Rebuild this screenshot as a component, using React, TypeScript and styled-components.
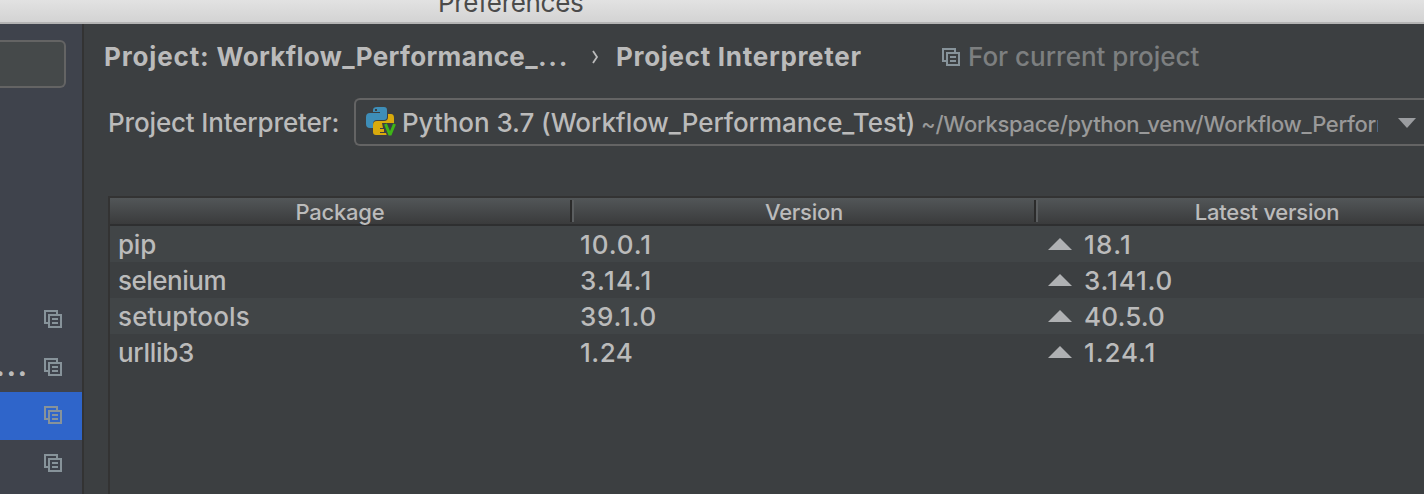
import React from "react";
import styled, { createGlobalStyle } from "styled-components";

const GlobalStyle = createGlobalStyle`
  * { box-sizing: border-box; }
  html, body { margin: 0; padding: 0; overflow: hidden; background: #3c3f41; }
  body { font-family: Inter, "Liberation Sans", sans-serif; font-size: 26px; color: #bbbbbb; }
`;

const Window = styled.div`
  width: 1424px;
  height: 494px;
  display: flex;
  flex-direction: column;
  overflow: hidden;
`;

const TitleBar = styled.header`
  height: 24px;
  flex: none;
  display: flex;
  align-items: flex-end;
  padding: 0 0 3px 438px;
  overflow: hidden;
  background: linear-gradient(#e2e2e2, #d3d3d3);
  border-bottom: 2px solid #b4b4b4;
  color: #4b4b4b;
`;

const Text = styled.span<{ $spacing?: number; $size?: number; $weight?: number; $color?: string }>`
  white-space: pre;
  line-height: 32px;
  letter-spacing: ${(p) => p.$spacing ?? 0}px;
  font-size: ${(p) => p.$size ?? 26}px;
  font-weight: ${(p) => p.$weight ?? 500};
  color: ${(p) => p.$color ?? "inherit"};
`;

const Body = styled.div`
  flex: 1;
  display: flex;
  min-height: 0;
`;

const Sidebar = styled.aside`
  width: 84px;
  flex: none;
  background: #3f434c;
  border-right: 2px solid #333333;
  padding-top: 16px;
`;

const SearchField = styled.div`
  width: 66px;
  height: 48px;
  margin-bottom: 208px;
  background: #45494a;
  border: 2px solid #646464;
  border-left: 0;
  border-radius: 0 6px 6px 0;
`;

const SidebarItem = styled.div<{ $selected?: boolean }>`
  height: 48px;
  display: flex;
  align-items: center;
  justify-content: flex-end;
  gap: 15px;
  padding: 0 20px 2px 0;
  background: ${(p) => (p.$selected ? "#2f65ca" : "transparent")};
`;

const Main = styled.main`
  flex: 1;
  min-width: 0;
  display: flex;
  flex-direction: column;
`;

const Breadcrumb = styled.div`
  height: 74px;
  flex: none;
  display: flex;
  align-items: center;
  padding: 0 0 8px 20px;
`;

const CrumbArrow = styled.svg`
  flex: none;
  margin: 0 16px 0 0;
`;

const Crumb = styled.div<{ $width: number }>`
  width: ${(p) => p.$width}px;
  flex: none;
  display: flex;
  align-items: center;
  gap: 8px;
`;

const InterpreterRow = styled.div`
  height: 48px;
  flex: none;
  display: flex;
  align-items: center;
  padding-left: 24px;
`;

const Label = styled.label`
  width: 246px;
  flex: none;
  display: flex;
  padding-top: 2px;
`;

const Combo = styled.div`
  flex: 1;
  height: 48px;
  min-width: 0;
  display: flex;
  align-items: center;
  border: 2px solid #646464;
  border-right: 0;
  border-radius: 6px 0 0 6px;
  padding-left: 10px;
`;

const ComboValue = styled.div`
  width: 976px;
  flex: none;
  display: flex;
  align-items: baseline;
  overflow: hidden;
  padding-top: 2px;
  margin: 0 20px 0 4px;
`;

const ValueName = styled.div`
  width: 519px;
  flex: none;
`;

const Table = styled.section`
  flex: 1;
  margin: 50px 0 0 24px;
  border-top: 2px solid #333333;
  border-left: 2px solid #333333;
  overflow: hidden;
`;

const columns = "462px 464px 462px";

const HeaderRow = styled.div`
  display: grid;
  grid-template-columns: ${columns};
  width: 1388px;
  height: 28px;
  background: linear-gradient(#525658, #3a3b3c 26px);
  border-bottom: 2px solid #2e2f30;
`;

const HeaderCell = styled.div`
  height: 22px;
  margin-top: 2px;
  padding-top: 2px;
  display: flex;
  align-items: center;
  justify-content: center;
  border-left: 2px solid #5b5e60;
  border-right: 2px solid #2b2b2b;
  &:first-child { border-left: 0; }
`;

const Row = styled.div<{ $striped: boolean }>`
  display: grid;
  grid-template-columns: ${columns};
  width: 1388px;
  height: 36px;
  background: ${(p) => (p.$striped ? "#414547" : "transparent")};
`;

const Cell = styled.div<{ $indent?: number }>`
  display: flex;
  align-items: center;
  gap: 12px;
  padding: 2px 0 0 ${(p) => p.$indent ?? 8}px;
`;

const Glyph = styled.svg`
  flex: none;
`;

const UpgradeGlyph = styled(Glyph)`
  margin-bottom: 2px;
`;

const ArrowGlyph = styled(Glyph)`
  margin-top: 2px;
`;

function CopyIcon() {
  return (
    <Glyph width="18" height="18" viewBox="0 0 18 18" fill="none" stroke="#87939a" strokeWidth="2">
      <path d="M4 13H1V1H13V4" />
      <path d="M5 5H17V17H5Z" />
      <path d="M8 9H14M8 13H14" />
    </Glyph>
  );
}

function PythonIcon() {
  return (
    <Glyph width="32" height="32" viewBox="0 0 32 32">
      <path fill="#3e8eb8" d="M11 1H18Q21 1 21 4V11Q21 14 18 14H11Q7 14 7 18V22H4Q0 22 0 18V11Q0 7 4 7H14V6H7V4Q7 1 11 1Z" />
      <rect x="9" y="3" width="2" height="2" fill="#3c3f41" />
      <path fill="#d9aa0c" d="M22 8H25Q28 8 28 12V20L24 28V29H10Q7 29 7 26V19Q7 15 11 15H18Q22 15 22 11Z" />
      <path fill="#3c3f41" d="M16 17H31L25 30H21L20 27H14V26H18V23H14V22H17Z" />
      <path fill="none" stroke="#3eb517" strokeWidth="3" strokeLinejoin="bevel" d="M19.5 18L24 29L28.5 18" />
    </Glyph>
  );
}

function UpgradeIcon() {
  return (
    <UpgradeGlyph width="24" height="12" viewBox="0 0 24 12">
      <path fill="#afb1b3" d="M0 12L12 0L24 12Z" />
    </UpgradeGlyph>
  );
}

const packages = [
  { name: "pip", version: "10.0.1", latest: "18.1", spacing: [-0.2, 0.9, 1.3] },
  { name: "selenium", version: "3.14.1", latest: "3.141.0", spacing: [-0.5, 1.3, 0.85] },
  { name: "setuptools", version: "39.1.0", latest: "40.5.0", spacing: [0.15, 0.8, 0.15] },
  { name: "urllib3", version: "1.24", latest: "1.24.1", spacing: [-0.3, 0.5, 0.9] },
];

export default function App() {
  return (
    <Window>
      <GlobalStyle />
      <TitleBar>
        <Text $spacing={-0.3} $weight={400}>Preferences</Text>
      </TitleBar>
      <Body>
        <Sidebar>
          <SearchField />
          <SidebarItem><CopyIcon /></SidebarItem>
          <SidebarItem><Text $weight={800} $spacing={2}>...</Text><CopyIcon /></SidebarItem>
          <SidebarItem $selected><CopyIcon /></SidebarItem>
          <SidebarItem><CopyIcon /></SidebarItem>
        </Sidebar>
        <Main>
          <Breadcrumb>
            <Crumb $width={488}>
              <div>
                <Text $weight={700} $spacing={0.85}>Project: </Text>
                <Text $weight={700} $spacing={0.35}>Workflow_Performance_</Text>
                <Text $weight={700} $spacing={1.8}>...</Text>
              </div>
            </Crumb>
            <CrumbArrow width="8" height="14" viewBox="0 0 8 14" fill="none" stroke="#bbbbbb" strokeWidth="1.8">
              <path d="M1 1L5 7L1 13" />
            </CrumbArrow>
            <Crumb $width={326}><Text $weight={700} $spacing={0.7}>Project Interpreter</Text></Crumb>
            <Crumb $width={300}><CopyIcon /><Text $color="#7d7f80" $spacing={0}>For current project</Text></Crumb>
          </Breadcrumb>
          <InterpreterRow>
            <Label><Text $spacing={-0.15}>Project Interpreter:</Text></Label>
            <Combo>
              <PythonIcon />
              <ComboValue>
                <ValueName><Text $spacing={-0.06}>Python 3.7 (Workflow_Performance_Test)</Text></ValueName>
                <Text $size={22} $color="#999999" $spacing={-0.3}>~/Workspace/python_venv/Workflow_Performance_Test/bin</Text>
              </ComboValue>
              <ArrowGlyph width="18" height="10" viewBox="0 0 18 10"><path fill="#9b9da0" d="M0 0H18L9 10Z" /></ArrowGlyph>
            </Combo>
          </InterpreterRow>
          <Table>
            <HeaderRow>
              <HeaderCell><Text $size={22} $spacing={-0.25}>Package</Text></HeaderCell>
              <HeaderCell><Text $size={22} $spacing={-0.25}>Version</Text></HeaderCell>
              <HeaderCell><Text $size={22} $spacing={-0.25}>Latest version</Text></HeaderCell>
            </HeaderRow>
            {packages.map((p, i) => (
              <Row key={p.name} $striped={i % 2 === 0}>
                <Cell><Text $spacing={p.spacing[0]}>{p.name}</Text></Cell>
                <Cell><Text $spacing={p.spacing[1]}>{p.version}</Text></Cell>
                <Cell $indent={12}><UpgradeIcon /><Text $spacing={p.spacing[2]}>{p.latest}</Text></Cell>
              </Row>
            ))}
          </Table>
        </Main>
      </Body>
    </Window>
  );
}
